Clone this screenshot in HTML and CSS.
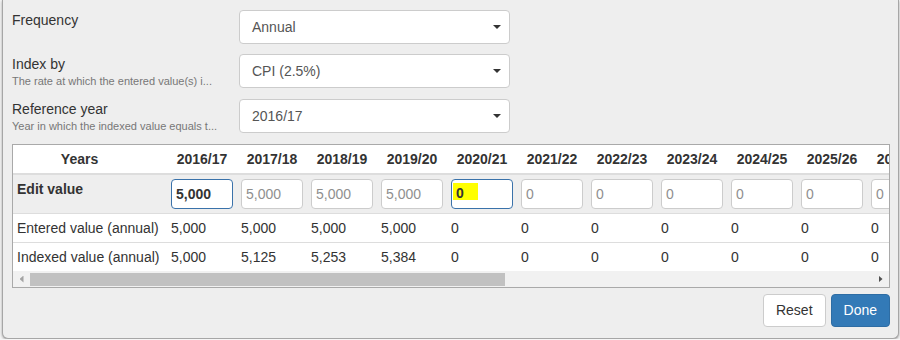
FILE: index.html
```html
<!DOCTYPE html>
<html lang="en">
<head>
  <meta charset="UTF-8">
  <meta name="viewport" content="width=device-width, initial-scale=1.0">
  <title>Edit values</title>
  <link rel="stylesheet" href="styles.css">
</head>
<body>
  <div class="modal">
    <div class="modal-body">
      <div class="form-row">
        <div class="field-label">Frequency</div>
        <div class="select"><span>Annual</span><span class="caret"></span></div>
      </div>
      <div class="form-row">
        <div class="field-label">
          Index by
          <div class="field-hint">The rate at which the entered value(s) i...</div>
        </div>
        <div class="select"><span>CPI (2.5%)</span><span class="caret"></span></div>
      </div>
      <div class="form-row">
        <div class="field-label">
          Reference year
          <div class="field-hint">Year in which the indexed value equals t...</div>
        </div>
        <div class="select"><span>2016/17</span><span class="caret"></span></div>
      </div>

      <div class="table-wrap">
        <div class="table-scroll">
          <table class="values">
            <colgroup>
              <col class="col-head">
              <col><col><col><col><col><col><col><col><col><col><col>
            </colgroup>
            <thead>
              <tr>
                <th class="row-head">Years</th>
                <th>2016/17</th><th>2017/18</th><th>2018/19</th><th>2019/20</th><th>2020/21</th>
                <th>2021/22</th><th>2022/23</th><th>2023/24</th><th>2024/25</th><th>2025/26</th><th>2026/27</th>
              </tr>
            </thead>
            <tbody>
              <tr class="edit-row">
                <td class="row-head"><strong>Edit value</strong></td>
                <td><input class="value-input focused" value="5,000"></td>
                <td><input class="value-input" placeholder="5,000"></td>
                <td><input class="value-input" placeholder="5,000"></td>
                <td><input class="value-input" placeholder="5,000"></td>
                <td><div class="value-input focused marked"><mark>0</mark></div></td>
                <td><input class="value-input" placeholder="0"></td>
                <td><input class="value-input" placeholder="0"></td>
                <td><input class="value-input" placeholder="0"></td>
                <td><input class="value-input" placeholder="0"></td>
                <td><input class="value-input" placeholder="0"></td>
                <td><input class="value-input" placeholder="0"></td>
              </tr>
              <tr>
                <td class="row-head">Entered value (annual)</td>
                <td>5,000</td><td>5,000</td><td>5,000</td><td>5,000</td><td>0</td>
                <td>0</td><td>0</td><td>0</td><td>0</td><td>0</td><td>0</td>
              </tr>
              <tr>
                <td class="row-head">Indexed value (annual)</td>
                <td>5,000</td><td>5,125</td><td>5,253</td><td>5,384</td><td>0</td>
                <td>0</td><td>0</td><td>0</td><td>0</td><td>0</td><td>0</td>
              </tr>
            </tbody>
          </table>
        </div>
        <div class="scrollbar">
          <span class="scroll-arrow left"></span>
          <span class="scroll-thumb"></span>
          <span class="scroll-track"></span>
          <span class="scroll-arrow right"></span>
        </div>
      </div>
    </div>

    <div class="modal-footer">
      <button class="btn btn-default">Reset</button>
      <button class="btn btn-primary">Done</button>
    </div>
  </div>
</body>
</html>
```

FILE: styles.css
```css
body {
  margin: 0;
  font-family: "Liberation Sans", Arial, sans-serif;
  font-size: 14px;
  line-height: 20px;
  color: #333;
  background: #f5f5f5;
}

.modal {
  box-sizing: border-box;
  width: 897px;
  margin-left: 2px;
  background: #eee;
  border: 1px solid #a6a6a6;
  border-top: 0;
  border-radius: 0 0 6px 6px;
  box-shadow: 0 1px 3px rgba(0,0,0,0.35);
}

.modal-body {
  padding: 10px 8px 0 9px;
}

.form-row {
  display: flex;
  margin-bottom: 10px;
}
.field-label {
  width: 227px;
}
.field-hint {
  font-size: 11px;
  line-height: 15px;
  color: #777;
}

.select {
  box-sizing: border-box;
  width: 271px;
  height: 34px;
  padding: 6px 8px 6px 12px;
  display: flex;
  align-items: center;
  justify-content: space-between;
  background: #fff;
  border: 1px solid #ccc;
  border-radius: 4px;
  color: #555;
}
.caret {
  width: 0;
  height: 0;
  border-top: 4px solid #333;
  border-left: 4px solid transparent;
  border-right: 4px solid transparent;
}

.table-wrap {
  border: 1px solid #a9a9a9;
  background: #fff;
}
.table-scroll {
  overflow: hidden;
}

table.values {
  border-collapse: collapse;
  table-layout: fixed;
  width: 923px;
}
table.values col {
  width: 70px;
}
table.values col.col-head {
  width: 153px;
}

th {
  padding: 4px 3px 4px 5px;
  text-align: center;
  font-weight: bold;
  border-bottom: 2px solid #ddd;
  white-space: nowrap;
}
th.row-head {
  padding-left: 4px;
  padding-right: 24px;
}

td {
  padding: 4px 3px 4px 5px;
  border-top: 1px solid #ddd;
  vertical-align: top;
  white-space: nowrap;
}
td.row-head {
  padding-left: 4px;
}
.edit-row td {
  background: #eee;
  border-top: 0;
}

.value-input {
  box-sizing: border-box;
  width: 62px;
  height: 30px;
  margin: 0;
  padding: 0 4px;
  font-family: inherit;
  font-size: 14px;
  color: #333;
  background: #fff;
  border: 1px solid #ccc;
  border-radius: 4px;
  outline: none;
}
.value-input::placeholder {
  color: #8f8f8f;
}
.value-input.focused {
  border-color: #3a72aa;
  font-weight: bold;
}
.value-input.marked {
  display: flex;
  align-items: flex-start;
  padding: 3px 0 0 1px;
}
.value-input mark {
  box-sizing: border-box;
  display: block;
  width: 25px;
  height: 17px;
  padding-left: 3px;
  line-height: 20px;
  background: #ff0;
  color: #333;
}

.scrollbar {
  display: flex;
  align-items: center;
  height: 16px;
  background: #f1f1f1;
}
.scroll-arrow {
  width: 17px;
  height: 16px;
  display: flex;
  align-items: center;
  justify-content: center;
}
.scroll-arrow::before {
  content: "";
  width: 4px;
  height: 7px;
}
.scroll-arrow.left::before {
  background: #a3a3a3;
  clip-path: polygon(100% 0, 0 50%, 100% 100%);
}
.scroll-arrow.right::before {
  background: #505050;
  clip-path: polygon(0 0, 100% 50%, 0 100%);
}
.scroll-thumb {
  width: 475px;
  height: 13px;
  margin-top: 1px;
  background: #c1c1c1;
}
.scroll-track {
  flex: 1;
}

.modal-footer {
  display: flex;
  justify-content: flex-end;
  gap: 5px;
  padding: 6px 8px 11px 9px;
}

.btn {
  padding: 6px 12px;
  font-family: inherit;
  font-size: 14px;
  line-height: 19px;
  border: 1px solid;
  border-radius: 4px;
  cursor: pointer;
}
.btn-default {
  background: #fff;
  border-color: #ccc;
  color: #333;
}
.btn-primary {
  background: #337ab7;
  border-color: #2e6da4;
  color: #fff;
}
```
